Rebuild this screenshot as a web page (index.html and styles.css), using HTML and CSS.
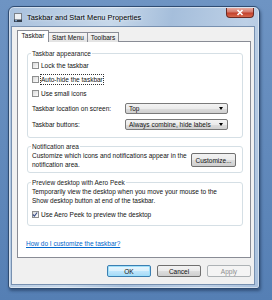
FILE: index.html
```html
<!DOCTYPE html>
<html lang="en">
<head>
    <meta charset="UTF-8">
    <meta name="viewport" content="width=device-width, initial-scale=1.0">
    <title>Taskbar and Start Menu Properties</title>
    <link rel="stylesheet" href="styles.css">
</head>
<body>
    <div class="window">
        <div class="titlebar">
            <svg class="app-icon" width="10" height="10" viewBox="0 0 10 10">
                <rect x="1.5" y="0.5" width="7" height="8" fill="#eef1f4" stroke="#7b8189"/>
                <rect x="1" y="6.5" width="8" height="2.5" fill="#34404f"/>
                <rect x="2" y="7.2" width="2" height="1" fill="#8fb6e0"/>
            </svg>
            <span class="title">Taskbar and Start Menu Properties</span>
            <div class="close-btn">
                <svg width="8" height="7" viewBox="0 0 8 7">
                    <path d="M1.5 1 L6.5 6 M6.5 1 L1.5 6" stroke="#fff" stroke-width="1.6"/>
                </svg>
            </div>
        </div>

        <div class="client">
            <div class="tabs">
                <div class="tab active">Taskbar</div>
                <div class="tab tab-wide">Start Menu</div>
                <div class="tab">Toolbars</div>
            </div>

            <div class="panel">
                <fieldset class="group group-appearance">
                    <legend>Taskbar appearance</legend>
                    <label class="check"><span class="box"></span>Lock the taskbar</label>
                    <label class="check"><span class="box"></span><span class="focus">Auto-hide the taskbar</span></label>
                    <label class="check"><span class="box"></span>Use small icons</label>
                    <div class="field-row">
                        <span>Taskbar location on screen:</span>
                        <div class="combo">Top</div>
                    </div>
                    <div class="field-row">
                        <span>Taskbar buttons:</span>
                        <div class="combo">Always combine, hide labels</div>
                    </div>
                </fieldset>

                <fieldset class="group group-notify">
                    <legend>Notification area</legend>
                    <div class="notify-row">
                        <p>Customize which icons and notifications appear in the notification area.</p>
                        <button class="btn btn-customize">Customize...</button>
                    </div>
                </fieldset>

                <fieldset class="group group-peek">
                    <legend>Preview desktop with Aero Peek</legend>
                    <p class="peek-text">Temporarily view the desktop when you move your mouse to the Show desktop button at end of the taskbar.</p>
                    <label class="check check-peek">
                        <span class="box">
                            <svg width="7" height="7" viewBox="0 0 7 7">
                                <path d="M1 3.5 L2.8 5.3 L6 1.2" fill="none" stroke="#3b4f8a" stroke-width="1.3"/>
                            </svg>
                        </span>Use Aero Peek to preview the desktop
                    </label>
                </fieldset>

                <a class="help-link" href="#">How do I customize the taskbar?</a>
            </div>

            <div class="buttons">
                <button class="btn btn-default">OK</button>
                <button class="btn">Cancel</button>
                <button class="btn" disabled>Apply</button>
            </div>
        </div>
    </div>
</body>
</html>
```

FILE: styles.css
```css
* {
    margin: 0;
    padding: 0;
    box-sizing: border-box;
}

body {
    width: 272px;
    height: 300px;
    overflow: hidden;
    background: linear-gradient(to bottom, #6e94c3, #557fb4);
    font-family: 'Liberation Sans', Arial, sans-serif;
    font-size: 6.5px;
    line-height: 9px;
    color: #111;
}

.window {
    margin: 6px 0 0 8px;
    width: 252px;
    height: 283px;
    display: flex;
    flex-direction: column;
    padding: 0 4px 3px 2px;
    border: 1px solid #2f4c72;
    border-radius: 6px 6px 3px 3px;
    background: linear-gradient(100deg, #a9c1dd 0%, #c7d8ea 35%, #a5bedb 55%, #bdd0e6 80%, #a9c1dd 100%);
    box-shadow: inset 0 0 0 1px rgba(255, 255, 255, 0.45), 1px 2px 3px rgba(20, 40, 70, 0.5);
}

/* Title bar */
.titlebar {
    position: relative;
    height: 19px;
    display: flex;
    align-items: center;
    padding-left: 2px;
}

.app-icon {
    margin-top: 2px;
}

.title {
    margin-left: 4px;
    margin-top: 1px;
    font-size: 7.4px;
    color: #000;
    text-shadow: 0 0 3px rgba(255, 255, 255, 0.9);
}

.close-btn {
    position: absolute;
    top: 1px;
    right: 1px;
    width: 28px;
    height: 10px;
    display: flex;
    align-items: center;
    justify-content: center;
    border: 1px solid #6a2a24;
    border-top: none;
    border-radius: 0 0 4px 4px;
    background: linear-gradient(to bottom, #e7a99f 0%, #d47a6c 45%, #c2402c 55%, #d7684c 100%);
}

/* Client area */
.client {
    flex: 1;
    display: flex;
    flex-direction: column;
    padding: 4px 3px 0 5px;
    border: 1px solid #7790b0;
    background: #f0f0f0;
}

.tabs {
    position: relative;
    z-index: 1;
    display: flex;
    align-items: flex-end;
    height: 11px;
    margin-bottom: -1px;
}

.tab {
    width: 32px;
    height: 10px;
    margin-right: -1px;
    text-align: center;
    line-height: 9px;
    border: 1px solid #898c95;
    border-bottom: none;
    background: linear-gradient(to bottom, #f5f5f5, #e2e2e2);
}

.tab-wide {
    width: 40px;
}

.tab.active {
    height: 12px;
    line-height: 10px;
    background: #fff;
    z-index: 2;
}

.panel {
    height: 217px;
    padding: 0 7px 0 9px;
    border: 1px solid #898c95;
    background: #fff;
}

/* Group boxes */
.group {
    border: 1px solid #d5dfe5;
    border-radius: 3px;
    padding: 0 4px 5px 4px;
}

.group legend {
    padding: 0 1px;
    margin-left: -1px;
    color: #1a1a1a;
}

.group-appearance {
    margin-top: 7px;
}

.group-notify {
    margin-top: 4px;
    padding-bottom: 3px;
}

.group-peek {
    margin-top: 5px;
    padding-bottom: 4px;
}

.peek-text {
    width: 192px;
}

.check {
    display: flex;
    align-items: center;
    height: 14px;
}

.check-peek {
    margin-top: 2px;
}

.box {
    width: 7px;
    height: 7px;
    margin-right: 2px;
    border: 1px solid #8e8f8f;
    background: linear-gradient(135deg, #dadada, #fdfdfd);
    display: flex;
}

.box svg {
    margin: -1px 0 0 -1px;
}

.focus {
    outline: 1px dotted #333;
    outline-offset: 0;
}

.field-row {
    display: grid;
    grid-template-columns: 93px 103px;
    align-items: center;
    height: 16px;
}

.combo {
    position: relative;
    height: 11px;
    padding-left: 3px;
    line-height: 9px;
    border: 1px solid #7a7a7a;
    border-radius: 2px;
    background: linear-gradient(to bottom, #f3f3f3 0%, #ebebeb 50%, #dddddd 51%, #cfcfcf 100%);
}

.combo::after {
    content: '';
    position: absolute;
    right: 4px;
    top: 3px;
    border-left: 2.5px solid transparent;
    border-right: 2.5px solid transparent;
    border-top: 3px solid #000;
}

.notify-row {
    display: flex;
    align-items: center;
    justify-content: space-between;
    padding-right: 2px;
}

.notify-row p {
    width: 155px;
}

/* Buttons */
.btn {
    width: 44px;
    height: 12px;
    font-family: inherit;
    font-size: 6.5px;
    color: #111;
    border: 1px solid #707070;
    border-radius: 2px;
    background: linear-gradient(to bottom, #f2f2f2 0%, #ebebeb 50%, #dddddd 51%, #cfcfcf 100%);
}

.btn-customize {
    width: 45px;
    height: 14px;
}

.btn-default {
    border-color: #3c7fb1;
    background: linear-gradient(to bottom, #e9f6fd 0%, #d9f0fc 50%, #bee6fd 51%, #a7d9f5 100%);
    box-shadow: inset 0 0 0 1px #9fe0fb;
}

.btn:disabled {
    color: #8d8d8d;
    border-color: #adb2b5;
    background: #f4f4f4;
}

.help-link {
    display: block;
    margin: 13px 0 0 -1px;
    color: #0066cc;
    text-decoration: underline;
}

.buttons {
    display: flex;
    justify-content: flex-end;
    gap: 6px;
    margin-top: 7px;
}
```
